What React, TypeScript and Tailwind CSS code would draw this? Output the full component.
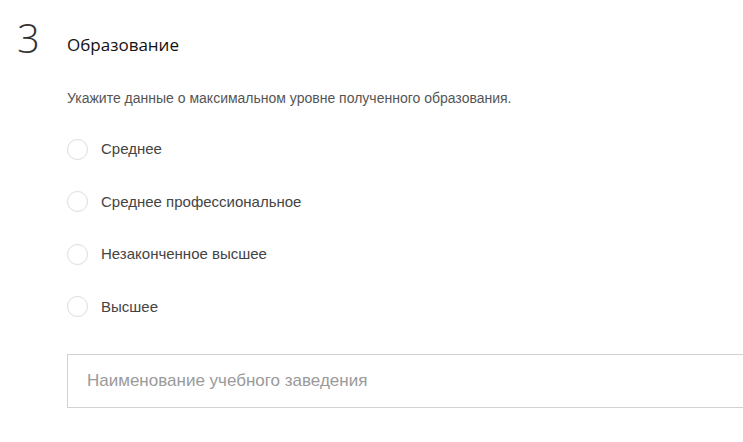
import React, { useState } from 'react';

const options = ['Среднее', 'Среднее профессиональное', 'Незаконченное высшее', 'Высшее'];

export default function App() {
    const [selected, setSelected] = useState<string | null>(null);

    return (
        <div className="w-[743px] h-[442px] overflow-hidden bg-white font-['Liberation_Sans',Arial,sans-serif]">
            {/* Step header */}
            <div className="flex items-start pt-[18px] pl-[17px]">
                <span className="w-[50px] font-['Open_Sans',sans-serif] font-thin text-[40px] leading-[40px] text-[#333]">
                    3
                </span>
                <h2 className="mt-[15px] font-['Open_Sans',sans-serif] text-[17px] leading-[24px] text-[#111]">
                    Образование
                </h2>
            </div>

            <div className="pl-[67px]">
                <p className="mt-[31px] text-[14px] leading-[18px] text-[#555]">
                    Укажите данные о максимальном уровне полученного образования.
                </p>

                {/* Options */}
                <div className="mt-[16px] flex flex-col">
                    {options.map((o) => (
                        <label
                            key={o}
                            className="flex items-center h-[52.5px] cursor-pointer"
                            onClick={() => setSelected(o)}
                        >
                            <span className="w-[21px] h-[21px] rounded-full border border-[#dcdcdc] flex items-center justify-center">
                                {selected === o && <span className="w-[9px] h-[9px] rounded-full bg-[#555]" />}
                            </span>
                            <span className="ml-[13px] text-[15px] text-[#444]">{o}</span>
                        </label>
                    ))}
                </div>

                {/* School name */}
                <input
                    type="text"
                    placeholder="Наименование учебного заведения"
                    className="mt-[21px] w-[700px] h-[54px] border border-[#d2d2d2] px-[19px] text-[17px] text-[#333] placeholder:text-[#9a9a9a] outline-none"
                />
            </div>
        </div>
    );
}
